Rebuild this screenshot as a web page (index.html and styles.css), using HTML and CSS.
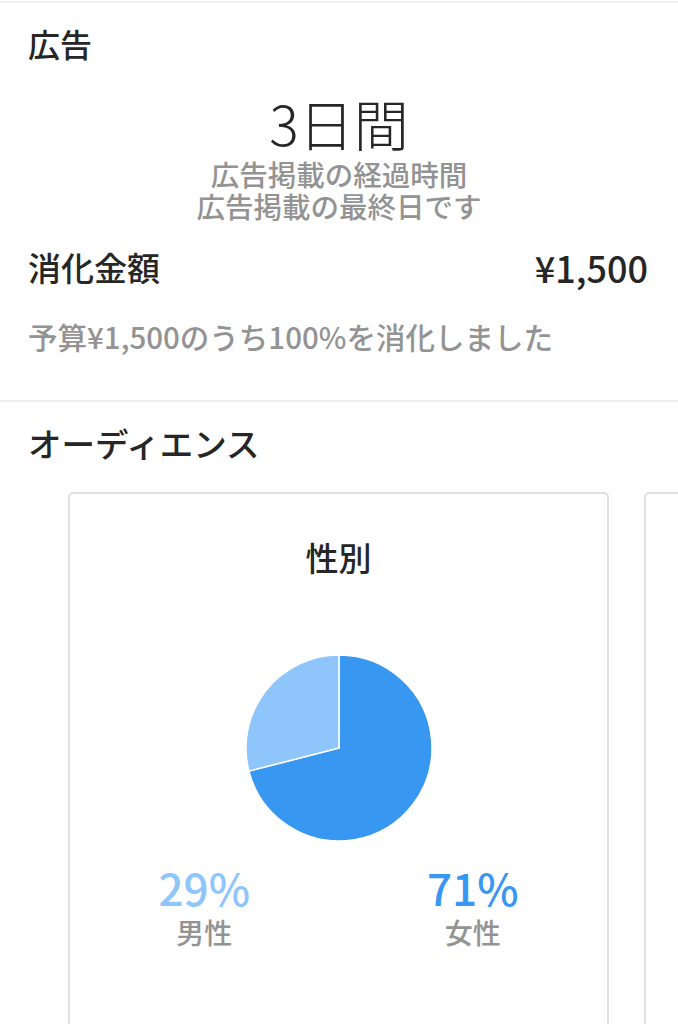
FILE: index.html
```html
<!DOCTYPE html>
<html lang="ja">
<head>
    <meta charset="UTF-8">
    <meta name="viewport" content="width=device-width, initial-scale=1.0">
    <title>広告</title>
    <link rel="stylesheet" href="styles.css">
</head>
<body>
    <!-- 広告の概要 -->
    <section class="section ad-summary">
        <h2 class="section-title">広告</h2>
        <div class="duration">3日間</div>
        <div class="duration-note">広告掲載の経過時間</div>
        <div class="duration-note">広告掲載の最終日です</div>
        <div class="spend-row">
            <span class="spend-label">消化金額</span>
            <span class="spend-value">¥1,500</span>
        </div>
        <p class="spend-note">予算¥1,500のうち100%を消化しました</p>
    </section>

    <!-- オーディエンス -->
    <section class="section audience">
        <h2 class="section-title">オーディエンス</h2>
        <div class="card-strip">
            <div class="card">
                <h3 class="card-title">性別</h3>
                <svg class="pie" width="190" height="190" viewBox="0 0 190 190">
                    <path d="M95 95 L95 2 A93 93 0 1 1 4.92 118.13 Z" fill="#3897f0" stroke="#fff" stroke-width="1.5"/>
                    <path d="M95 95 L4.92 118.13 A93 93 0 0 1 95 2 Z" fill="#8ec5fb" stroke="#fff" stroke-width="1.5"/>
                </svg>
                <div class="stats">
                    <div class="stat">
                        <div class="stat-value male">29%</div>
                        <div class="stat-label">男性</div>
                    </div>
                    <div class="stat">
                        <div class="stat-value female">71%</div>
                        <div class="stat-label">女性</div>
                    </div>
                </div>
            </div>
            <div class="card"></div>
        </div>
    </section>
</body>
</html>
```

FILE: styles.css
```css
body {
    margin: 0;
    padding-top: 1px;
    background-color: #fff;
    color: #262626;
    font-family: "Noto Sans CJK JP", "Noto Sans", sans-serif;
    overflow-x: hidden;
}
.section {
    border-top: 2px solid #efefef;
    padding: 20px 28px 0 28px;
}
.ad-summary {
    padding-bottom: 46px;
}
.section-title {
    margin: 0;
    font-size: 32px;
    line-height: 40px;
    font-weight: 500;
}
.audience .section-title {
    font-size: 33.5px;
}
.duration {
    margin-top: 29px;
    text-align: center;
    font-size: 55px;
    line-height: 60px;
    font-weight: 300;
}
.duration-note {
    margin-top: 8px;
    text-align: center;
    font-size: 28.5px;
    line-height: 27px;
    font-weight: 500;
    color: #939393;
}
.duration-note + .duration-note {
    margin-top: 5px;
}
.spend-row {
    margin-top: 28px;
    display: flex;
    justify-content: space-between;
    align-items: center;
    height: 40px;
}
.spend-label {
    font-size: 33px;
    line-height: 40px;
    font-weight: 500;
}
.spend-value {
    font-size: 36px;
    line-height: 40px;
    font-weight: 500;
    margin-right: 2px;
}
.spend-note {
    margin: 31px 0 0 0;
    font-size: 29.5px;
    line-height: 36px;
    font-weight: 500;
    color: #939393;
}
.audience {
    padding-top: 21px;
}
.card-strip {
    display: flex;
    gap: 35px;
    margin-top: 29px;
    margin-left: 40px;
}
.card {
    flex: 0 0 541px;
    box-sizing: border-box;
    height: 620px;
    border: 2px solid #e1e1e1;
    border-radius: 5px;
    padding-top: 43px;
    text-align: center;
}
.card-title {
    margin: 0;
    font-size: 33px;
    line-height: 40px;
    font-weight: 500;
}
.pie {
    display: block;
    margin: 76px auto 0 auto;
}
.stats {
    display: flex;
    justify-content: space-around;
    margin-top: 20px;
}
.stat {
    width: 140px;
}
.stat-value {
    font-size: 44px;
    line-height: 48px;
    font-weight: 500;
}
.stat-value.male {
    color: #8ec5fb;
}
.stat-value.female {
    color: #3897f0;
}
.stat-label {
    margin-top: 5px;
    font-size: 28px;
    line-height: 32px;
    font-weight: 500;
    color: #939393;
}
```
